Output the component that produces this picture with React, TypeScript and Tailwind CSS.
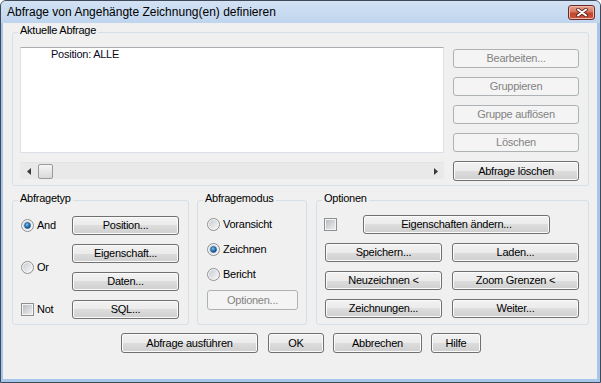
import React from "react";

const btnOn =
  "border-[#707070] bg-[linear-gradient(to_bottom,#f2f2f2_0%,#ebebeb_50%,#dddddd_50%,#cfcfcf_100%)] shadow-[inset_0_0_0_1px_#fbfbfb] text-black";
const btnOff = "border-[#adb2b5] bg-[#f4f4f4] text-[#838383]";

function Btn({
  className = "",
  disabled = false,
  children,
}: {
  className?: string;
  disabled?: boolean;
  children: React.ReactNode;
}) {
  return (
    <div
      className={`flex shrink-0 items-center justify-center rounded-[3px] border leading-[13px] whitespace-nowrap ${
        disabled ? btnOff : btnOn
      } ${className}`}
    >
      {children}
    </div>
  );
}

function Group({
  label,
  className = "",
  children,
}: {
  label: string;
  className?: string;
  children: React.ReactNode;
}) {
  return (
    <div className={`relative shrink-0 rounded-[3px] border border-[#d5dfe5] ${className}`}>
      <span className="absolute -top-[9px] left-[5px] bg-[#f0f0f0] px-[2px] leading-[13px] whitespace-nowrap">
        {label}
      </span>
      {children}
    </div>
  );
}

function Radio({ checked = false }: { checked?: boolean }) {
  return (
    <svg width="13" height="13" viewBox="0 0 13 13" className="shrink-0">
      <defs>
        <linearGradient id="rbg" x1="0" y1="0" x2="1" y2="1">
          <stop offset="0" stopColor="#c9cdd2" />
          <stop offset="1" stopColor="#f6f6f6" />
        </linearGradient>
        <radialGradient id="rdot" cx="0.4" cy="0.35" r="0.7">
          <stop offset="0" stopColor="#7fc1f1" />
          <stop offset="0.5" stopColor="#2c7dc4" />
          <stop offset="1" stopColor="#0e3f78" />
        </radialGradient>
      </defs>
      <circle cx="6.5" cy="6.5" r="6" fill="#f4f4f4" stroke="#8e8f8f" strokeWidth="1" />
      <circle cx="6.5" cy="6.5" r="4.5" fill="url(#rbg)" />
      {checked && <circle cx="6.5" cy="6.5" r="3" fill="url(#rdot)" stroke="#1c4d82" strokeWidth="0.6" />}
    </svg>
  );
}

function Check() {
  return (
    <div className="flex h-[13px] w-[13px] shrink-0 items-center justify-center border border-[#8e8f8f] bg-[#f4f4f4]">
      <div className="h-[9px] w-[9px] bg-[linear-gradient(135deg,#b9bec4,#ececec)]" />
    </div>
  );
}

export default function App() {
  return (
    <div className="h-[383px] w-[601px] bg-white font-['Liberation_Sans',Arial,sans-serif] text-[11px] tracking-[-0.25px] text-black">
      <div className="flex h-[383px] w-[601px] flex-col rounded-t-[6px] border border-[#3e4a59] bg-[#a6c6ea]">
        {/* Title bar */}
        <div className="flex h-[22px] shrink-0 items-start justify-between rounded-t-[5px] bg-[linear-gradient(to_bottom,#d3e2f4,#bfd5ee)]">
          <span className="mt-[4px] pl-[6px] text-[12px] leading-[15px] tracking-[0px] whitespace-nowrap">
            Abfrage von Angehängte Zeichnung(en) definieren
          </span>
          <div className="mr-[5px] mt-[4px] flex h-[15px] w-[27px] items-center justify-center rounded-[3px] border border-[#6b2a26] bg-[linear-gradient(to_bottom,#e8a596_0%,#d7775f_45%,#c2442c_55%,#c9573d_100%)] shadow-[inset_0_0_0_1px_#efb9ab]">
            <svg width="12" height="9" viewBox="0 0 12 9">
              <path d="M2 1.5 L10 7.5 M10 1.5 L2 7.5" stroke="#5a2420" strokeWidth="3.6" strokeLinecap="round" />
              <path d="M2 1.5 L10 7.5 M10 1.5 L2 7.5" stroke="#ffffff" strokeWidth="2" strokeLinecap="round" />
            </svg>
          </div>
        </div>

        {/* Content */}
        <div className="mb-[3px] ml-[2px] mr-[3px] flex flex-1 flex-col bg-[#f0f0f0]">
          <Group label="Aktuelle Abfrage" className="ml-[9px] mt-[9px] h-[154px] w-[577px]">
            <div className="flex pl-[7px] pt-[14px]">
              <div className="flex w-[424px] flex-col">
                <div className="h-[106px] border border-[#dbdfe6] border-t-[#abadb3] bg-white">
                  <div className="pl-[30px] leading-[13px] text-[#0a0a1e]">Position: ALLE</div>
                </div>
                <div className="mt-[9px] flex h-[17px] items-center border-t border-[#e4e4e4] bg-[#e9e9e9]">
                  <div className="flex w-[17px] justify-center">
                    <svg width="4" height="7" viewBox="0 0 4 7">
                      <path d="M4 0 L0 3.5 L4 7 Z" fill="#3a3a3a" />
                    </svg>
                  </div>
                  <div className="ml-[1px] h-[15px] w-[15px] rounded-[2px] border border-[#9a9a9a] bg-[linear-gradient(to_bottom,#f6f6f6,#d9d9d9)]" />
                  <div className="flex-1" />
                  <div className="flex w-[17px] justify-center">
                    <svg width="4" height="7" viewBox="0 0 4 7">
                      <path d="M0 0 L4 3.5 L0 7 Z" fill="#3a3a3a" />
                    </svg>
                  </div>
                </div>
              </div>
              <div className="ml-[9px] mt-[2px] flex w-[126px] flex-col gap-[9px]">
                <Btn disabled className="h-[19px] w-[126px]">Bearbeiten...</Btn>
                <Btn disabled className="h-[19px] w-[126px]">Gruppieren</Btn>
                <Btn disabled className="h-[19px] w-[126px]">Gruppe auflösen</Btn>
                <Btn disabled className="h-[19px] w-[126px]">Löschen</Btn>
                <Btn className="h-[20px] w-[126px]">Abfrage löschen</Btn>
              </div>
            </div>
          </Group>

          <div className="ml-[9px] mt-[14px] flex">
            <Group label="Abfragetyp" className="h-[125px] w-[177px]">
              <div className="grid grid-cols-[51px_107px] grid-rows-[19px_19px_19px_19px] gap-y-[9px] pl-[8px] pt-[15px]">
                <div className="flex items-center">
                  <Radio checked />
                  <span className="ml-[3px]">And</span>
                </div>
                <Btn className="h-[19px] w-[107px]">Position...</Btn>
                <div className="row-span-2 flex items-center">
                  <Radio />
                  <span className="ml-[3px]">Or</span>
                </div>
                <Btn className="h-[19px] w-[107px]">Eigenschaft...</Btn>
                <Btn className="h-[19px] w-[107px]">Daten...</Btn>
                <div className="flex items-center">
                  <Check />
                  <span className="ml-[3px]">Not</span>
                </div>
                <Btn className="h-[19px] w-[107px]">SQL...</Btn>
              </div>
            </Group>

            <Group label="Abfragemodus" className="ml-[8px] h-[125px] w-[110px]">
              <div className="flex flex-col pl-[9px] pt-[17px]">
                <div className="flex h-[13px] items-center">
                  <Radio />
                  <span className="ml-[3px] leading-[13px]">Voransicht</span>
                </div>
                <div className="mt-[12px] flex h-[13px] items-center">
                  <Radio checked />
                  <span className="ml-[3px] leading-[13px]">Zeichnen</span>
                </div>
                <div className="mt-[12px] flex h-[13px] items-center">
                  <Radio />
                  <span className="ml-[3px] leading-[13px]">Bericht</span>
                </div>
                <Btn disabled className="mt-[9px] h-[20px] w-[91px]">Optionen...</Btn>
              </div>
            </Group>

            <Group label="Optionen" className="ml-[9px] h-[125px] w-[273px]">
              <div className="flex flex-col pl-[7px] pt-[14px]">
                <div className="flex items-center">
                  <Check />
                  <Btn className="ml-[26px] h-[19px] w-[187px]">Eigenschaften ändern...</Btn>
                </div>
                <div className="ml-[1px] mt-[9px] flex gap-[10px]">
                  <Btn className="h-[19px] w-[117px]">Speichern...</Btn>
                  <Btn className="h-[19px] w-[127px]">Laden...</Btn>
                </div>
                <div className="ml-[1px] mt-[9px] flex gap-[10px]">
                  <Btn className="h-[19px] w-[117px]">Neuzeichnen &lt;</Btn>
                  <Btn className="h-[19px] w-[127px]">Zoom Grenzen &lt;</Btn>
                </div>
                <div className="ml-[1px] mt-[9px] flex gap-[10px]">
                  <Btn className="h-[19px] w-[117px]">Zeichnungen...</Btn>
                  <Btn className="h-[19px] w-[127px]">Weiter...</Btn>
                </div>
              </div>
            </Group>
          </div>

          <div className="ml-[118px] mt-[8px] flex">
            <Btn className="h-[20px] w-[137px]">Abfrage ausführen</Btn>
            <Btn className="ml-[10px] h-[20px] w-[56px]">OK</Btn>
            <Btn className="ml-[9px] h-[20px] w-[89px]">Abbrechen</Btn>
            <Btn className="ml-[9px] h-[20px] w-[50px]">Hilfe</Btn>
          </div>
        </div>
      </div>
    </div>
  );
}
